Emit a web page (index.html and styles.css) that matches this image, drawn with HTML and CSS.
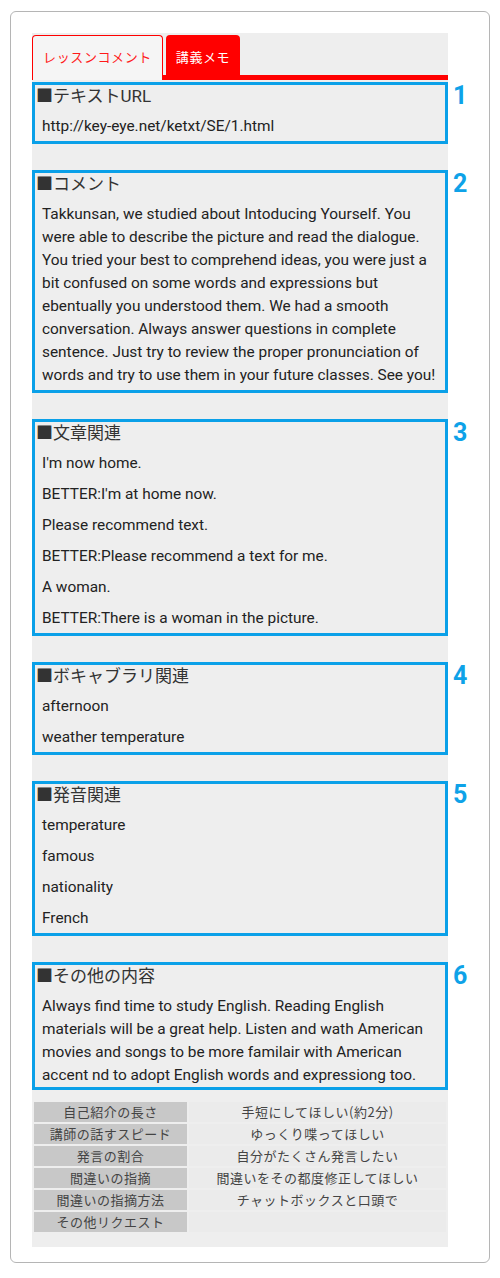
FILE: index.html
```html
<!DOCTYPE html>
<html lang="ja">
<head>
<meta charset="utf-8">
<title>講義メモ</title>
<link rel="stylesheet" href="styles.css">
</head>
<body>
<div class="card">
  <div class="panel">
    <div class="tabs">
      <div class="tab tab-comment">レッスンコメント</div>
      <div class="tab tab-memo">講義メモ</div>
    </div>
    <div class="sections">
      <section class="box">
        <h2 class="box-title">■テキストURL</h2>
        <p class="box-text">http://key-eye.net/ketxt/SE/1.html</p>
        <span class="num">1</span>
      </section>
      <section class="box">
        <h2 class="box-title">■コメント</h2>
        <p class="box-text">Takkunsan, we studied about Intoducing Yourself. You<br>were able to describe the picture and read the dialogue.<br>You tried your best to comprehend ideas, you were just a<br>bit confused on some words and expressions but<br>ebentually you understood them. We had a smooth<br>conversation. Always answer questions in complete<br>sentence. Just try to review the proper pronunciation of<br>words and try to use them in your future classes. See you!</p>
        <span class="num">2</span>
      </section>
      <section class="box">
        <h2 class="box-title">■文章関連</h2>
        <p class="box-text">I'm now home.</p>
        <p class="box-text">BETTER:I'm at home now.</p>
        <p class="box-text">Please recommend text.</p>
        <p class="box-text">BETTER:Please recommend a text for me.</p>
        <p class="box-text">A woman.</p>
        <p class="box-text">BETTER:There is a woman in the picture.</p>
        <span class="num">3</span>
      </section>
      <section class="box">
        <h2 class="box-title">■ボキャブラリ関連</h2>
        <p class="box-text">afternoon</p>
        <p class="box-text">weather temperature</p>
        <span class="num">4</span>
      </section>
      <section class="box">
        <h2 class="box-title">■発音関連</h2>
        <p class="box-text">temperature</p>
        <p class="box-text">famous</p>
        <p class="box-text">nationality</p>
        <p class="box-text">French</p>
        <span class="num">5</span>
      </section>
      <section class="box box-last">
        <h2 class="box-title">■その他の内容</h2>
        <p class="box-text">Always find time to study English. Reading English<br>materials will be a great help. Listen and wath American<br>movies and songs to be more familair with American<br>accent nd to adopt English words and expressiong too.</p>
        <span class="num">6</span>
      </section>
    </div>
    <table class="prefs">
      <tr><th>自己紹介の長さ</th><td>手短にしてほしい(約2分)</td></tr>
      <tr><th>講師の話すスピード</th><td>ゆっくり喋ってほしい</td></tr>
      <tr><th>発言の割合</th><td>自分がたくさん発言したい</td></tr>
      <tr><th>間違いの指摘</th><td>間違いをその都度修正してほしい</td></tr>
      <tr><th>間違いの指摘方法</th><td>チャットボックスと口頭で</td></tr>
      <tr><th>その他リクエスト</th><td></td></tr>
    </table>
  </div>
</div>
</body>
</html>
```
FILE: styles.css
```css
* { box-sizing: border-box; }
html, body { margin: 0; padding: 0; background: #fff; }
body {
  font-family: Roboto, "Noto Sans CJK JP", sans-serif;
  color: #222;
}
.card {
  margin: 11px 0 0 10px;
  width: 480px;
  height: 1252px;
  border: 1px solid #b5b5b5;
  border-radius: 6px;
  padding: 21px 41px 0 21px;
}
.panel {
  background: #eeeeee;
  padding: 2px 0 13px;
}
.tabs {
  display: flex;
  align-items: flex-start;
  gap: 3px;
  height: 45px;
  border-bottom: 5px solid #ff0000;
}
.tab {
  font-family: "Noto Sans CJK JP", sans-serif;
  font-size: 13px;
  letter-spacing: 0.6px;
  line-height: 20px;
  padding-top: 12px;
  text-align: center;
  border-radius: 4px 4px 0 0;
}
.tab-comment {
  width: 131px;
  height: 45px;
  margin-bottom: -5px;
  background: #f5f5f5;
  border: 1px solid #ff0000;
  border-bottom: 0;
  color: #ff1a1a;
  padding-top: 11px;
}
.tab-memo {
  width: 74px;
  height: 40px;
  background: #ff0000;
  color: #fff;
}
.sections {
  display: flex;
  flex-direction: column;
  gap: 26px;
  margin-top: 2px;
}
.box {
  position: relative;
  border: 3px solid #0aa0e8;
  padding: 0 2px 3px 1px;
}
.box-last { padding-bottom: 0; }
.box-title {
  margin: 0;
  font-size: 17px;
  line-height: 22px;
  font-weight: 400;
  color: #333;
}
.box-text {
  margin: 8px 0 0 6px;
  font-size: 15.4px;
  line-height: 23px;
  color: #222;
}
.num {
  position: absolute;
  left: 100%;
  top: -2px;
  margin-left: 8px;
  font-family: Roboto, sans-serif;
  font-size: 25px;
  line-height: 25px;
  font-weight: 700;
  color: #0ea2e8;
}
.prefs {
  margin-top: 10px;
  width: 100%;
  border-spacing: 2px;
  font-family: "Noto Sans CJK JP", sans-serif;
  font-size: 13px;
  letter-spacing: 0.5px;
  color: #444;
}
.prefs th, .prefs td {
  height: 20px;
  padding: 0;
  line-height: 20px;
  text-align: center;
  font-weight: 400;
}
.prefs th {
  width: 153px;
  background: #c8c8c8;
}
.prefs td {
  background: #ebebeb;
}
```
